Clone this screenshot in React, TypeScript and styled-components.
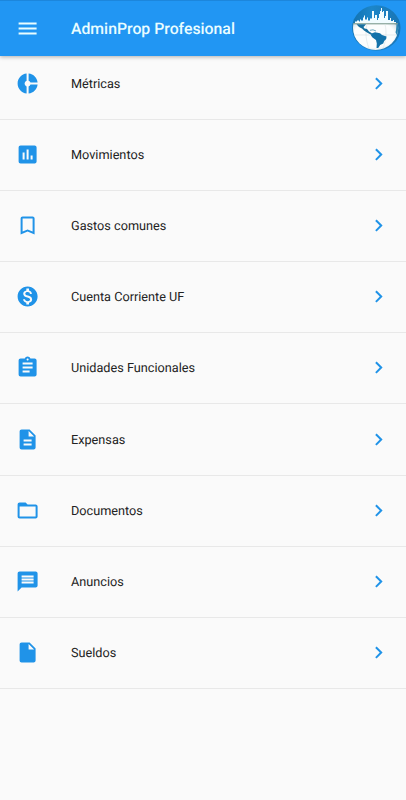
import styled, { createGlobalStyle } from "styled-components";
import {
  MdAssignment,
  MdBookmarkBorder,
  MdChevronRight,
  MdDescription,
  MdDonutSmall,
  MdFolderOpen,
  MdInsertChart,
  MdInsertDriveFile,
  MdMenu,
  MdMessage,
  MdMonetizationOn,
} from "react-icons/md";

const items = [
  { label: "Métricas", icon: MdDonutSmall },
  { label: "Movimientos", icon: MdInsertChart },
  { label: "Gastos comunes", icon: MdBookmarkBorder },
  { label: "Cuenta Corriente UF", icon: MdMonetizationOn },
  { label: "Unidades Funcionales", icon: MdAssignment },
  { label: "Expensas", icon: MdDescription },
  { label: "Documentos", icon: MdFolderOpen },
  { label: "Anuncios", icon: MdMessage },
  { label: "Sueldos", icon: MdInsertDriveFile },
];

const GlobeLogo = () => (
  <svg width="50" height="50" viewBox="0 0 50 50">
    <defs>
      <radialGradient id="sea" cx="46%" cy="38%" r="58%">
        <stop offset="0.7" stopColor="#fbfdfd" />
        <stop offset="0.9" stopColor="#dbe5ea" />
        <stop offset="1" stopColor="#7e9db2" />
      </radialGradient>
      <linearGradient id="sky" x1="0" y1="0" x2="1" y2="0">
        <stop offset="0" stopColor="#1272b0" />
        <stop offset="0.4" stopColor="#1c86c9" />
        <stop offset="1" stopColor="#1a75b4" />
      </linearGradient>
      <clipPath id="globe">
        <ellipse cx="24.6" cy="24" rx="22.6" ry="22" />
      </clipPath>
    </defs>
    <ellipse cx="25.3" cy="24" rx="24.2" ry="22.8" fill="url(#sky)" />
    <g clipPath="url(#globe)">
      <rect y="19" width="50" height="31" fill="url(#sea)" />
      <path
        d="M4 19.500v-2h2v-1h2v1h1v-2h1v1h2v-3h1v-2h1v4h2v-2h1v3h2v-2h2V7h2v7h1v-3h2v5h1v-2h1v-4h1V7h1V4h1v4h1v-1h1v7h1v-2h1V7h2v9h2v-2h1v3h2v-1h1v2h2v1.500z"
        fill="#f1fcff"
      />
      <path d="M2 19.800h45" stroke="#6f9284" strokeWidth="1" />
      <path
        d="M3 31h43M16 20c-2 9-1 18 3 27M34 20c2 9 1 18-3 27"
        fill="none"
        stroke="#d8e2e4"
        strokeWidth="0.6"
      />
      <path
        d="M5.500 20.300h9.500l-1.500 1.700-1 1 1 1.500 2.500.5 2 2.500 2.500 1.500 1 1.500-1.500.3-4-2.300-3-2-2-2-3-1.500z"
        fill="#176f9e"
      />
      <path
        d="M20.500 29.500l3.500-1.200 5 1 2 1.700 4.500 1.500-.3 2.500-2 2-1 2.500-3 1.500-2 3h-1.700l.3-4.500-.8-3.500-3.500-2.500-1.500-2z"
        fill="#1272aa"
      />
      <path d="M45.500 20.300h3v11h-2.500l-1.500-3 .5-2z" fill="#2d86b4" />
      <path d="M19 26.300l3-.5 3 1.200" fill="none" stroke="#4b94b2" strokeWidth="0.8" />
    </g>
  </svg>
);

export default function App() {
  return (
    <Screen>
      <GlobalStyle />
      <AppBar>
        <MenuButton aria-label="Menú">
          <MdMenu size={24} />
        </MenuButton>
        <Title>AdminProp Profesional</Title>
        <GlobeLogo />
      </AppBar>
      <List>
        {items.map(({ label, icon: Icon }) => (
          <Item key={label}>
            <Tile>
              <Icon size={24} />
              <Label>{label}</Label>
              <MdChevronRight size={24} />
            </Tile>
          </Item>
        ))}
      </List>
    </Screen>
  );
}

const GlobalStyle = createGlobalStyle`
  * {
    box-sizing: border-box;
  }

  body {
    margin: 0;
    background: #fafafa;
    font-family: Roboto, sans-serif;
    text-rendering: geometricPrecision;
  }
`;

const Screen = styled.div`
  height: 800px;
  overflow: hidden;
  background: #fafafa;
`;

const AppBar = styled.header`
  position: relative;
  display: flex;
  align-items: center;
  height: 56px;
  padding: 0 4.6px 0 15.7px;
  border-top: 1px solid #1c86dc;
  background: #2196f3;
  color: #e9fdff;
  box-shadow: 0 1px 4px rgba(0, 0, 0, 0.3);
`;

const MenuButton = styled.button`
  display: flex;
  padding: 0;
  border: none;
  background: none;
  color: inherit;
  cursor: pointer;

  svg {
    transform: translate(-0.4px, -0.5px);
  }
`;

const Title = styled.h1`
  flex: 1;
  margin: 0 0 0 31.3px;
  font-size: 15.8px;
  font-weight: 500;
  line-height: 20px;
  white-space: nowrap;
`;

const List = styled.ul`
  margin: 0;
  padding: 0;
  list-style: none;
`;

const Item = styled.li`
  height: 71.2px;

  &::after {
    content: "";
    display: block;
    height: 1px;
    margin-top: 7.4px;
    background: #e8e8e8;
  }
`;

const Tile = styled.div`
  display: flex;
  align-items: center;
  height: 55.2px;
  padding: 0 15.3px 0 15.7px;
  color: #2093e8;
  cursor: pointer;

  svg {
    transform: translate(-0.4px, -0.4px);
  }
`;

const Label = styled.span`
  flex: 1;
  margin-left: 31.3px;
  padding-top: 2px;
  color: #222;
  font-size: 12.7px;
  line-height: 16px;
`;
